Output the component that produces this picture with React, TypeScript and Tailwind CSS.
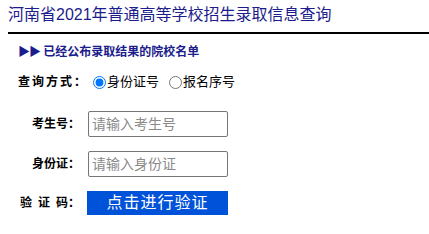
import React from 'react';

const font = { fontFamily: '"Liberation Sans", "Noto Sans CJK SC", sans-serif' };

export default function App() {
  return (
    <div className="w-[429px] h-[234px] bg-white overflow-hidden pl-2" style={font}>
      {/* Header */}
      <h1 className="pt-[5px] h-[32px] text-[16px] leading-[20px] text-[#1c1c8c] font-normal whitespace-nowrap">
        河南省2021年普通高等学校招生录取信息查询
      </h1>
      <div className="h-[2px] bg-black" />

      {/* Link */}
      <div className="mt-[11px] pl-[10px] text-[12px] leading-[14px] font-bold text-[#1c1c8c] whitespace-nowrap">
        <span className="text-[12px] tracking-[-1px]">▶▶</span> 已经公布录取结果的院校名单
      </div>

      {/* Form */}
      <div className="mt-[13px] flex flex-col">
        <div className="flex items-center h-[20px]">
          <div className="w-[76px] pl-[10px] text-[12px] font-bold tracking-[2px] text-black whitespace-nowrap">查询方式：</div>
          <label className="flex items-center ml-[9px] text-[13px] text-black">
            <input type="radio" name="mode" defaultChecked className="w-[13px] h-[13px] mr-[1px]" />
            身份证号
          </label>
          <label className="flex items-center ml-[10px] text-[13px] text-black">
            <input type="radio" name="mode" className="w-[13px] h-[13px] mr-[1px]" />
            报名序号
          </label>
        </div>

        <div className="flex items-center mt-[19px]">
          <div className="w-[72px] text-right text-[12px] font-bold text-black whitespace-nowrap">考生号：</div>
          <input
            placeholder="请输入考生号"
            className="ml-[8px] w-[140px] h-[26px] border border-[#767676] rounded-[2px] px-[3px] text-[14px] placeholder:text-[#8a8a8a] outline-none"
          />
        </div>

        <div className="flex items-center mt-[14px]">
          <div className="w-[72px] text-right text-[12px] font-bold text-black whitespace-nowrap">身份证：</div>
          <input
            placeholder="请输入身份证"
            className="ml-[8px] w-[140px] h-[26px] border border-[#767676] rounded-[2px] px-[3px] text-[14px] placeholder:text-[#8a8a8a] outline-none"
          />
        </div>

        <div className="flex items-center mt-[14px]">
          <div className="w-[72px] flex justify-end text-[12px] font-bold text-black whitespace-nowrap">
            <span className="mr-[6px]">验</span>
            <span className="mr-[6px]">证</span>
            <span>码：</span>
          </div>
          <button className="ml-[7px] w-[141px] h-[24px] bg-[#0052d9] text-white text-[16px] leading-[24px] tracking-[1px]">
            点击进行验证
          </button>
        </div>
      </div>
    </div>
  );
}
